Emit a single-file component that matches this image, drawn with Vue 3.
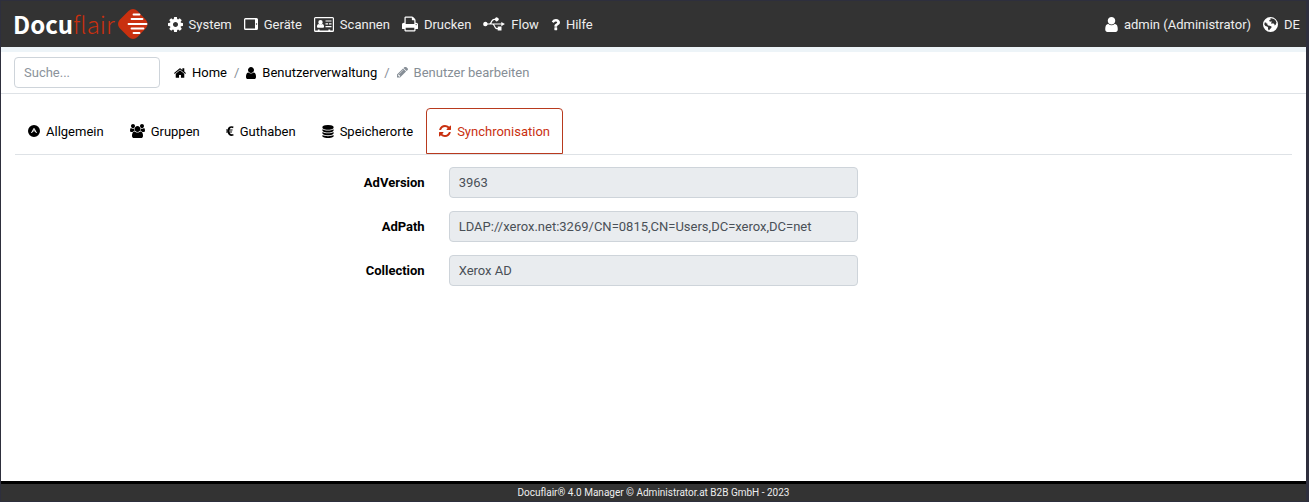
<script setup>
import { ref } from 'vue'

const shapes = {
  cog: { w: 15, h: 15, box: '128 128 1536 1536', d: 'M1152 896q0-106-75-181t-181-75-181 75-75 181 75 181 181 75 181-75 75-181zm512-109v222q0 12-8 23t-20 13l-185 28q-19 54-39 91 35 50 107 138 10 12 10 25t-9 23q-27 37-99 108t-94 71q-12 0-26-9l-138-108q-44 23-91 38-16 136-29 186-7 28-36 28h-222q-14 0-24.5-8.5t-11.5-21.5l-28-184q-49-16-90-37l-141 107q-10 9-25 9-14 0-25-11-126-114-165-168-7-10-7-23 0-12 8-23 15-21 51-66.5t54-70.5q-27-50-41-99l-183-27q-13-2-21-12.5t-8-23.5v-222q0-12 8-23t19-13l186-28q14-46 39-92-40-57-107-138-10-12-10-24 0-10 9-23 26-36 98.5-107.5t94.5-71.5q13 0 26 10l138 107q44-23 91-38 16-136 29-186 7-28 36-28h222q14 0 24.5 8.5t11.5 21.5l28 184q49 16 90 37l142-107q9-9 24-9 13 0 25 10 129 119 165 170 7 8 7 22 0 12-8 23-15 21-51 66.5t-54 70.5q26 50 41 98l183 28q13 2 21 12.5t8 23.5z' },
  tablet: { w: 14, h: 12, box: '0 0 14 12', d: 'M1.5 0h11A1.5 1.5 0 0 1 14 1.500v9a1.500 1.500 0 0 1-1.500 1.500h-11A1.500 1.500 0 0 1 0 10.500v-9A1.500 1.500 0 0 1 1.500 0zM1.300 1.500v9h9.700v-9zM12.500 5.300a.7.7 0 1 0 .01 1.400.7.7 0 0 0-.01-1.400z' },
  card: { w: 20, h: 15, box: '0 0 20 15', d: 'M1.500 0h17A1.500 1.500 0 0 1 20 1.500v12a1.500 1.500 0 0 1-1.500 1.500h-17A1.500 1.500 0 0 1 0 13.500v-12A1.500 1.500 0 0 1 1.500 0zM1.200 1.200v12.300h2.600v-.9h1.800v.9h8.800v-.9h1.800v.9h2.600V1.200zM6.500 3a2.200 2.200 0 1 1 0 4.400 2.200 2.200 0 0 1 0-4.400zM4.700 6.900q1.800 1.300 3.600 0 1.800.3 1.800 2.700 0 1.200-1.100 1.200H4q-1.100 0-1.100-1.200 0-2.400 1.800-2.700zM11.500 3.400h6v1.200h-6zM11.500 6.300h2.600v1.200h-2.600zM15 6.300h2.500v1.200H15zM11.500 9.100h6v1.200h-6z' },
  print: { w: 16, h: 16, box: '64 128 1664 1536', d: 'M448 1536h896v-256h-896v256zm0-640h896v-384h-160q-40 0-68-28t-28-68v-160h-640v640zm1152 64q0-26-19-45t-45-19-45 19-19 45 19 45 45 19 45-19 19-45zm128 0v416q0 13-9.500 22.500t-22.500 9.500h-224v160q0 40-28 68t-68 28h-960q-40 0-68-28t-28-68v-160h-224q-13 0-22.500-9.500t-9.500-22.500v-416q0-79 56.500-135.500t135.500-56.500h64v-544q0-40 28-68t68-28h672q40 0 88 20t76 48l152 152q28 28 48 76t20 88v256h64q79 0 135.500 56.500t56.500 135.500z' },
  usb: { w: 22, h: 14, box: '0 0 22 14', d: 'M2.500 4.700a2.300 2.300 0 0 1 2.200 1.700h1.500C7.800 6.400 8.200 1.700 11.200 1.700h.7A1.900 1.900 0 1 1 12 3.100h-.8C9.600 3.100 9.200 5.400 8.400 6.400h9.900V4.900L21.900 7l-3.600 2.200V7.600h-7.100c.9.900 1.300 3.300 2.700 3.300h.8V9.600h3.800v3.900h-3.800v-1.300h-.9C11.300 12.200 10.900 7.600 9.300 7.600H4.700A2.300 2.300 0 1 1 2.500 4.700z' },
  question: { w: 9, h: 13, box: '384 256 1024 1280', d: 'M1088 1256v240q0 16-12 28t-28 12h-240q-16 0-28-12t-12-28v-240q0-16 12-28t28-12h240q16 0 28 12t12 28zm316-600q0 54-15.500 101t-35 76.500-55 59.500-57.500 43.500-61 35.500q-41 23-68.500 65t-27.500 67q0 17-12 32.500t-28 15.500h-240q-15 0-25.500-18.500t-10.500-37.500v-45q0-83 65-156.500t143-108.500q59-27 84-56t25-76q0-42-46.500-74t-107.500-32q-65 0-108 29-35 25-107 115-13 16-31 16-12 0-25-8l-164-125q-13-10-15.500-25t5.500-28q160-266 464-266 80 0 161 31t146 83 106 127.500 41 158.500z' },
  user: { w: 13, h: 15, box: '256 128 1280 1536', d: 'M1536 1399q0 109-62.500 187t-150.500 78h-854q-88 0-150.500-78t-62.500-187q0-85 8.500-160.500t31.500-152 58.500-131 94-89 134.500-34.500q131 128 313 128t313-128q76 0 134.500 34.500t94 89 58.500 131 31.500 152 8.500 160.500zm-256-887q0 159-112.500 271.500t-271.500 112.500-271.500-112.500-112.500-271.500 112.500-271.500 271.500-112.500 271.500 112.500 112.500 271.500z' },
  globe: { w: 15, h: 15, box: '0 0 15 15', d: 'M7.500 0a7.500 7.500 0 1 1 0 15 7.500 7.500 0 0 1 0-15zM8.200 1.300 7 1.700l.9.700-1.400.6-.3 1.100 1 .7 1-.6.700.9-1 1 .8.700 1.400-.5 1.300.9.300 1.300 1-.8.800-2.300-.9-2-1.600-1.500zM1.700 5.400l-.4 2.200 1.100 1.500 1.700.3 1 1.100-.1 1.400.9 1.500 1.200-1.500 1.300-1.100.1-1.200-1.700-.9-1.600-.2-.9-.8.300-.9-1.100-.2-.4-1.200z' },
  home: { w: 12, h: 10, box: '89 253 1614 1283', d: 'M1472 992v480q0 26-19 45t-45 19h-384v-384h-256v384h-384q-26 0-45-19t-19-45v-480q0-1 .5-3t.5-3l575-474 575 474q1 2 1 6zm223-69l-62 74q-8 9-21 11h-3q-13 0-21-7l-692-577-692 577q-12 8-24 7-13-2-21-11l-62-74q-8-10-7-23.500t11-21.500l719-599q32-26 76-26t76 26l244 204v-195q0-14 9-23t23-9h192q14 0 23 9t9 23v408l219 182q10 8 11 21.500t-7 23.500z' },
  pencil: { w: 11, h: 11, box: '128 256 1515 1408', d: 'M491 1536l91-91-235-235-91 91v107h128v128h107zm523-928q0-22-22-22-10 0-17 7l-542 542q-7 7-7 17 0 22 22 22 10 0 17-7l542-542q7-7 7-17zm-54-192l416 416-832 832h-416v-416zm683 96q0 53-37 90l-166 166-416-416 166-165q36-38 90-38 53 0 91 38l235 234q37 39 37 91z' },
  general: { w: 12, h: 12, box: '0 0 12 12', d: 'M6 0a6 6 0 1 1 0 12A6 6 0 0 1 6 0zM5.500 3.200 3 8h1l.6-1.100L6 5.900l1.400 1L8 8h1L6.500 3.200zM6 4.200l.8 1.500L6 5.200l-.8.500z' },
  users: { w: 15, h: 14, box: '0 0 1920 1792', d: 'M593 896q-162 5-265 128h-134q-82 0-138-40.500t-56-118.500q0-353 124-353 6 0 43.500 21t97.500 42.500 119 21.500q67 0 133-23-5 37-5 66 0 139 81 256zm1071 637q0 120-73 189.500t-194 69.500h-874q-121 0-194-69.500t-73-189.500q0-53 3.500-103.500t14-109 26.500-108.500 43-97.500 62-81 85.500-53.500 111.500-20q10 0 43 21.500t73 48 107 48 135 21.500 135-21.500 107-48 73-48 43-21.500q61 0 111.500 20t85.500 53.500 62 81 43 97.500 26.500 108.500 14 109 3.500 103.500zm-1024-1277q0 106-75 181t-181 75-181-75-75-181 75-181 181-75 181 75 75 181zm704 384q0 159-112.500 271.500t-271.500 112.500-271.500-112.500-112.500-271.500 112.500-271.500 271.500-112.500 271.500 112.500 112.500 271.500zm576 225q0 78-56 118.500t-138 40.500h-134q-103-123-265-128 81-117 81-256 0-29-5-66 66 23 133 23 59 0 119-21.500t97.500-42.500 43.500-21q124 0 124 353zm-128-609q0 106-75 181t-181 75-181-75-75-181 75-181 181-75 181 75 75 181z' },
  euro: { w: 8, h: 10, box: '0 0 8 10', d: 'M7.500 0.500 7.100 2.200Q4.300 1.100 3.600 3.400h3.100l-.3 1.100H3.300v1h2.900l-.3 1.100H3.600q.8 2.300 3.600 1.300l.4 1.700Q2.800 11 1.600 6.600H0V5.500h1.300v-1H0V3.400h1.600Q2.700-.9 7.500.5z' },
  database: { w: 12, h: 13, box: '128 0 1536 1792', d: 'M896 768q237 0 443-43t325-127v170q0 69-103 128t-280 93.500-385 34.500-385-34.500-280-93.500-103-128v-170q119 84 325 127t443 43zm0 768q237 0 443-43t325-127v170q0 69-103 128t-280 93.500-385 34.500-385-34.500-280-93.500-103-128v-170q119 84 325 127t443 43zm0-384q237 0 443-43t325-127v170q0 69-103 128t-280 93.500-385 34.500-385-34.500-280-93.500-103-128v-170q119 84 325 127t443 43zm0-1152q208 0 385 34.500t280 93.500 103 128v128q0 69-103 128t-280 93.500-385 34.500-385-34.500-280-93.500-103-128v-128q0-69 103-128t280-93.500 385-34.500z' },
  refresh: { w: 12, h: 12, box: '128 128 1536 1536', d: 'M1639 1056q0 5-1 7-64 268-268 434.500t-478 166.500q-146 0-282.500-55t-243.500-157l-129 129q-19 19-45 19t-45-19-19-45v-448q0-26 19-45t45-19h448q26 0 45 19t19 45-19 45l-137 137q71 66 161 102t187 36q134 0 250-65t186-179q11-17 53-117 8-23 30-23h192q13 0 22.500 9.500t9.500 22.500zm25-800v448q0 26-19 45t-45 19h-448q-26 0-45-19t-19-45 19-45l138-138q-148-137-349-137-134 0-250 65t-186 179q-11 17-53 117-8 23-30 23h-199q-13 0-22.500-9.500t-9.500-22.500v-7q65-268 270-434.500t480-166.500q146 0 284 55.500t245 156.500l130-129q19-19 45-19t45 19 19 45z' },
}

const Icon = (props) => {
  const s = shapes[props.name]
  return h('svg', { class: 'icon', width: props.small ? s.w - 3 : s.w, height: props.small ? s.h - 3 : s.h, viewBox: s.box, fill: 'currentColor', 'fill-rule': 'evenodd', 'aria-hidden': 'true' }, [h('path', { d: s.d })])
}
Icon.props = { name: String, small: Boolean }

const menu = [
  ['cog', 'System'], ['tablet', 'Geräte'], ['card', 'Scannen'],
  ['print', 'Drucken'], ['usb', 'Flow'], ['question', 'Hilfe'],
]
const tabs = [
  ['general', 'Allgemein'], ['users', 'Gruppen'], ['euro', 'Guthaben'],
  ['database', 'Speicherorte'], ['refresh', 'Synchronisation'],
]
const active = ref('Synchronisation')
const search = ref('')
const fields = [
  { id: 'ad-version', label: 'AdVersion', value: '3963' },
  { id: 'ad-path', label: 'AdPath', value: 'LDAP://xerox.net:3269/CN=0815,CN=Users,DC=xerox,DC=net' },
  { id: 'collection', label: 'Collection', value: 'Xerox AD' },
]
</script>

<script>
import { h } from 'vue'
</script>

<template>
  <div class="page">
    <header class="navbar">
      <a class="brand" href="#" aria-label="Docuflair">
        <span class="brand-text"><b>Docu</b><span class="brand-light">flair</span></span>
        <svg width="30" height="32" viewBox="0 0 30 32" aria-hidden="true">
          <path d="M10.500 3Q15-1 19.500 3L28 12q3 4 0 8l-8.500 9q-4.500 4-9 0L1.500 20q-3-4 0-8z" fill="#c9300f" />
          <path d="M15.500 6.500h6M13.500 11h11M10.500 16h18M13.500 20.500h12M15.500 25h6" stroke="#fff" stroke-width="1.800" stroke-linecap="round" />
        </svg>
      </a>
      <nav class="menu" aria-label="Hauptmenü">
        <a v-for="[icon, text] in menu" :key="text" href="#" class="menu-item"><Icon :name="icon" />{{ text }}</a>
      </nav>
      <div class="account">
        <a href="#" class="menu-item"><Icon name="user" />admin (Administrator)</a>
        <a href="#" class="menu-item"><Icon name="globe" />DE</a>
      </div>
    </header>

    <div class="toolbar">
      <input v-model="search" class="search" type="text" placeholder="Suche..." aria-label="Suche" />
      <nav class="crumbs" aria-label="Pfad">
        <a href="#" class="crumb"><Icon name="home" />Home</a>
        <span class="slash">/</span>
        <a href="#" class="crumb person"><Icon name="user" small />Benutzerverwaltung</a>
        <span class="slash">/</span>
        <span class="crumb current"><Icon name="pencil" />Benutzer bearbeiten</span>
      </nav>
    </div>

    <main class="content">
      <div class="tabs" role="tablist">
        <button v-for="[icon, text] in tabs" :key="text" type="button" role="tab" class="tab" :class="{ active: active === text }" :aria-selected="active === text" @click="active = text"><Icon :name="icon" />{{ text }}</button>
      </div>
      <form class="form" @submit.prevent>
        <div v-for="f in fields" :key="f.id" class="row">
          <label :for="f.id">{{ f.label }}</label>
          <div class="control"><input :id="f.id" type="text" :value="f.value" readonly /></div>
        </div>
      </form>
    </main>

    <footer class="footer">Docuflair® 4.0 Manager © Administrator.at B2B GmbH - 2023</footer>
  </div>
</template>

<style>
body {
  background: #fff;
}
</style>

<style scoped>
* {
  box-sizing: border-box;
}
.page {
  display: flex;
  flex-direction: column;
  min-height: 100vh;
  border: solid #2e2f3d;
  border-width: 1px 3px 1px 1px;
  font: 13px/21px Roboto, "Liberation Sans", sans-serif;
  color: #000;
}
a {
  color: inherit;
  text-decoration: none;
}
.icon {
  flex: none;
}
.navbar {
  display: flex;
  align-items: center;
  height: 46px;
  padding: 0 6px 0 12px;
  background: #333;
  color: #eee;
}
.brand {
  display: flex;
  align-items: center;
  gap: 3px;
  margin-right: 20px;
}
.brand-text {
  font: 24px/32px "Noto Sans CJK SC", sans-serif;
  color: #fff;
}
.brand-light {
  font-weight: 300;
  color: #c9300f;
}
.menu,
.account {
  display: flex;
  gap: 12px;
}
.account {
  margin-left: auto;
}
.menu-item {
  display: flex;
  align-items: center;
  gap: 6px;
}
.menu-item .icon {
  color: #fff;
}
.toolbar {
  display: flex;
  align-items: center;
  gap: 14px;
  height: 47px;
  padding: 0 13px;
  border-top: 5px solid #edf4f8;
  border-bottom: 1px solid #dee2e6;
}
.search {
  width: 146px;
}
.search,
.control input {
  height: 31px;
  padding: 0 9px;
  border: 1px solid #ced4da;
  border-radius: 4px;
  font: inherit;
  color: #495057;
  background: #fff;
}
.search::placeholder {
  color: #8b939b;
  opacity: 1;
}
.crumbs {
  display: flex;
  gap: 7px;
}
.crumb {
  display: flex;
  align-items: center;
  gap: 6px;
}
.slash,
.current {
  color: #868e96;
}
.content {
  flex: 1;
  padding: 14px 14px 0;
}
.tabs {
  display: flex;
  border-bottom: 1px solid #dee2e6;
}
.tab {
  display: flex;
  align-items: center;
  gap: 6px;
  height: 46px;
  padding: 0 12px;
  border: 1px solid transparent;
  border-radius: 4px 4px 0 0;
  background: none;
  font: inherit;
  color: #000;
  cursor: pointer;
}
.tab.active {
  border-color: #b83a1e;
  color: #c9300f;
}
.form {
  display: grid;
  gap: 13px;
  padding: 12px 0;
}
.row {
  display: grid;
  grid-template-columns: repeat(3, 1fr);
  align-items: center;
}
label {
  padding-right: 16px;
  text-align: right;
  font-weight: 700;
}
.control {
  display: flex;
  padding: 0 8px;
}
.control input {
  width: 100%;
  background: #e9ecef;
}
.footer {
  border-top: 3px solid #000;
  background: #333;
  color: #eee;
  text-align: center;
  font-size: 10px;
  line-height: 17px;
}
</style>
